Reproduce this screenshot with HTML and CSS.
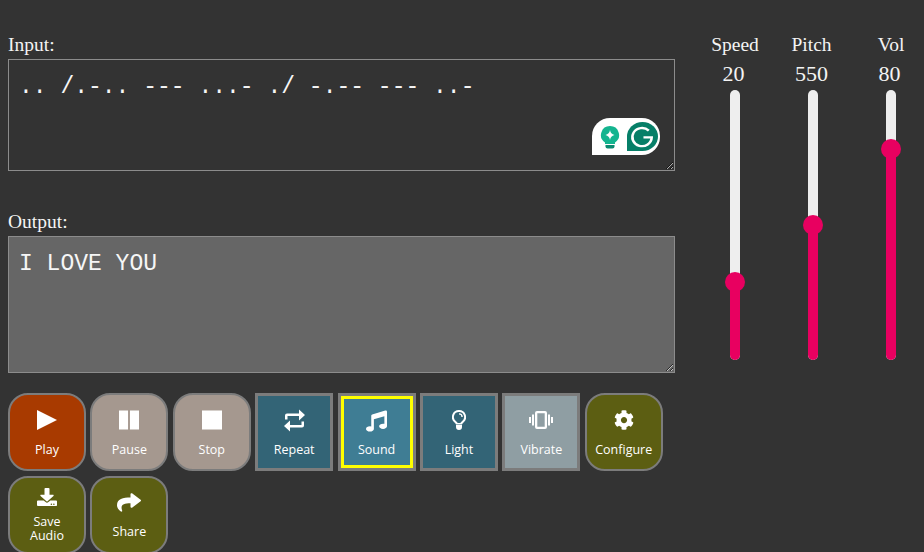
FILE: index.html
```html
<!DOCTYPE html>
<html lang="en">

<head>
    <meta charset="UTF-8">
    <meta name="viewport" content="width=device-width, initial-scale=1.0">
    <title>Morse Code Translator</title>
    <link rel="stylesheet" href="styles.css">
</head>

<body>
    <div class="page">
        <div class="main">
            <label class="field-label input-label" for="input">Input:</label>
            <div class="input-wrap">
                <textarea id="input" class="code-box input-box" spellcheck="false">.. /.-.. --- ...- ./ -.-- --- ..-</textarea>
                <div class="grammarly">
                    <svg class="bulb" viewBox="0 0 20 24" width="20" height="24">
                        <path fill="#14b48f" d="M10 1a9 9 0 0 0-5 16.5V19h10v-1.500A9 9 0 0 0 10 1z" />
                        <path fill="#fff" d="M10 5c.5 3 1.800 4.300 4.500 5-2.700.7-4 2-4.500 5-.5-3-1.800-4.300-4.500-5 2.700-.7 4-2 4.500-5z" />
                        <path fill="#0b8a70" d="M5.500 20h9v1.500a2 2 0 0 1-2 2h-5a2 2 0 0 1-2-2z" />
                    </svg>
                    <div class="g-mark">
                        <svg viewBox="0 0 32 32" width="31" height="29" preserveAspectRatio="none">
                            <path fill="#067f68" d="M16 0a16 16 0 0 1 0 32H0V16A16 16 0 0 1 16 0z" />
                            <path fill="none" stroke="#fff" stroke-width="2.600" d="M22.500 9.500A10 10 0 1 0 25.500 17H17" />
                        </svg>
                    </div>
                </div>
            </div>

            <label class="field-label output-label" for="output">Output:</label>
            <textarea id="output" class="code-box output-box" readonly>I LOVE YOU</textarea>

            <div class="buttons">
                <button class="btn round play">
                    <svg class="icon" viewBox="0 0 20 20"><path d="M0 0l20 10L0 20z" /></svg>
                    <span>Play</span>
                </button>
                <button class="btn round mute">
                    <svg class="icon" viewBox="0 0 21 20"><path d="M0 0h9.500v20H0zM11.500 0H21v20h-9.500z" /></svg>
                    <span>Pause</span>
                </button>
                <button class="btn round mute">
                    <svg class="icon" viewBox="0 0 21 20"><path d="M0 0h21v20H0z" /></svg>
                    <span>Stop</span>
                </button>
                <button class="btn toggle">
                    <svg class="icon repeat" viewBox="0 0 21 23">
                        <path d="M1 10.500V6.500A2 2 0 0 1 3 4.500h12V.5l6 5.500-6 5.500V7H3.500v3.500zM20 12.500v4a2 2 0 0 1-2 2H6v4L0 17l6-5.500V16h11.500v-3.500z" />
                    </svg>
                    <span>Repeat</span>
                </button>
                <button class="btn toggle active">
                    <svg class="icon music" viewBox="0 0 512 512"><path d="M470.38 1.51L150.41 96A32 32 0 0 0 128 126.51v261.41A139 139 0 0 0 96 384c-53 0-96 28.66-96 64s43 64 96 64 96-28.66 96-64V214.32l256-75v184.61a138.4 138.4 0 0 0-32-3.93c-53 0-96 28.66-96 64s43 64 96 64 96-28.65 96-64V32a32 32 0 0 0-41.62-30.49z" /></svg>
                    <span>Sound</span>
                </button>
                <button class="btn toggle">
                    <svg class="icon bulb-icon" viewBox="0 0 14 20">
                        <path fill-rule="evenodd" d="M7 0a7 7 0 0 0-4.500 12.400c.8.7 1.300 1.400 1.500 2.100h6c.2-.7.700-1.400 1.500-2.100A7 7 0 0 0 7 0zm0 2a5 5 0 0 1 3.200 8.900c-.8.7-1.500 1.300-1.900 2.100H5.700c-.4-.8-1.100-1.400-1.900-2.100A5 5 0 0 1 7 2z" />
                        <path d="M4 15h6v2a3 3 0 0 1-6 0zM7 3.200a3.800 3.800 0 0 1 3.800 3.800H9.400A2.400 2.400 0 0 0 7 4.600z" />
                    </svg>
                    <span>Light</span>
                </button>
                <button class="btn toggle off">
                    <svg class="icon wide" viewBox="0 0 24 18">
                        <path fill-rule="evenodd" d="M8 0h8a2 2 0 0 1 2 2v14a2 2 0 0 1-2 2H8a2 2 0 0 1-2-2V2a2 2 0 0 1 2-2zm.3 2.200v13.600h7.400V2.200z" />
                        <path d="M3 3.500h2V14.500H3zM19 3.500h2V14.500h-2zM0 6h2v6H0zM22 6h2v6h-2z" />
                    </svg>
                    <span>Vibrate</span>
                </button>
                <button class="btn round olive">
                    <svg class="icon" viewBox="0 0 512 512"><path d="M487.4 315.7l-42.6-24.6c4.3-23.2 4.3-47 0-70.2l42.6-24.6c4.9-2.8 7.1-8.6 5.500-14-11.100-35.600-30-67.800-54.700-94.600-3.800-4.100-10-5.100-14.800-2.300L380.800 110c-17.900-15.400-38.500-27.300-60.800-35.100V25.800c0-5.600-3.900-10.500-9.400-11.700-36.700-8.200-74.300-7.800-109.200 0-5.500 1.200-9.400 6.100-9.400 11.700V75c-22.200 7.900-42.800 19.800-60.800 35.100L88.700 85.500c-4.900-2.800-11-1.900-14.800 2.300-24.700 26.700-43.600 58.900-54.700 94.600-1.700 5.400.6 11.200 5.500 14L67.300 221c-4.300 23.200-4.300 47 0 70.200l-42.600 24.600c-4.900 2.800-7.100 8.600-5.500 14 11.100 35.600 30 67.800 54.700 94.600 3.800 4.100 10 5.100 14.800 2.300l42.600-24.600c17.900 15.400 38.500 27.300 60.800 35.100v49.200c0 5.600 3.900 10.500 9.400 11.700 36.700 8.200 74.300 7.800 109.200 0 5.500-1.200 9.400-6.100 9.400-11.700v-49.200c22.200-7.900 42.800-19.800 60.800-35.100l42.600 24.600c4.900 2.800 11 1.900 14.800-2.300 24.700-26.700 43.600-58.900 54.700-94.600 1.500-5.500-.7-11.300-5.600-14.100zM256 336c-44.100 0-80-35.900-80-80s35.900-80 80-80 80 35.900 80 80-35.900 80-80 80z" /></svg>
                    <span>Configure</span>
                </button>
                <button class="btn round olive save">
                    <svg class="icon small" viewBox="0 0 512 512" preserveAspectRatio="none"><path d="M216 0h80c13.300 0 24 10.700 24 24v168h87.700c17.800 0 26.700 21.500 14.100 34.100L269.700 378.300c-7.500 7.500-19.800 7.500-27.300 0L90.100 226.100c-12.600-12.600-3.700-34.100 14.100-34.100H192V24c0-13.300 10.700-24 24-24zm296 376v112c0 13.300-10.700 24-24 24H24c-13.300 0-24-10.700-24-24V376c0-13.300 10.700-24 24-24h146.700l49 49c20.100 20.100 52.500 20.100 72.600 0l49-49H488c13.300 0 24 10.700 24 24zm-124 88c0-11-9-20-20-20s-20 9-20 20 9 20 20 20 20-9 20-20zm64 0c0-11-9-20-20-20s-20 9-20 20 9 20 20 20 20-9 20-20z" /></svg>
                    <span>Save<br>Audio</span>
                </button>
                <button class="btn round olive share-btn">
                    <svg class="icon share" viewBox="0 0 512 512" preserveAspectRatio="none"><path d="M503.691 189.836L327.687 37.851C312.281 24.546 288 35.347 288 56.015v80.053C127.371 137.907 0 170.100 0 322.326c0 61.441 39.581 122.309 83.333 154.132 13.653 9.931 33.111-2.533 28.077-18.631C66.066 312.814 132.917 274.316 288 272.085V360c0 20.700 24.300 31.453 39.687 18.164l176.004-152c11.071-9.562 11.086-26.753 0-36.328z" /></svg>
                    <span>Share</span>
                </button>
            </div>
        </div>

        <div class="sliders">
            <div class="slider">
                <div class="slider-name">Speed</div>
                <div class="slider-value">20</div>
                <div class="track">
                    <div class="fill" style="height: 78px"><div class="thumb"></div></div>
                </div>
            </div>
            <div class="slider">
                <div class="slider-name pitch">Pitch</div>
                <div class="slider-value">550</div>
                <div class="track">
                    <div class="fill" style="height: 135px"><div class="thumb"></div></div>
                </div>
            </div>
            <div class="slider">
                <div class="slider-name">Vol</div>
                <div class="slider-value">80</div>
                <div class="track">
                    <div class="fill" style="height: 211px"><div class="thumb"></div></div>
                </div>
            </div>
        </div>
    </div>
</body>

</html>
```

FILE: styles.css
```css
html,
body {
    height: 100%;
}

body {
    margin: 0;
    background: #333;
    color: #fff;
    overflow: hidden;
}

.page {
    display: flex;
    padding: 35px 0 0 8px;
}

.main {
    width: 667px;
    display: flex;
    flex-direction: column;
}

.field-label {
    font-family: "Liberation Serif", serif;
    font-size: 19.500px;
    line-height: 20px;
    color: #f4f4f4;
    display: block;
}

.input-label {
    margin-bottom: 4px;
}

.output-label {
    margin-top: 41px;
    margin-bottom: 4px;
}

.input-wrap {
    position: relative;
}

.code-box {
    display: block;
    box-sizing: border-box;
    width: 667px;
    margin: 0;
    border: 1px solid #8c8c8c;
    color: #f6f6f6;
    font-family: "Liberation Mono", monospace;
    font-size: 23px;
    outline: none;
}

.input-box {
    height: 112px;
    padding: 11px 10px;
    background: #333;
    line-height: 32px;
}

.output-box {
    height: 137px;
    padding: 11px 10px;
    background: #666;
    line-height: 33px;
}

.grammarly {
    position: absolute;
    left: 584px;
    top: 59px;
    width: 68px;
    height: 37px;
    box-sizing: border-box;
    display: flex;
    align-items: center;
    padding-left: 8px;
    gap: 7px;
    background: #fff;
    border-radius: 18px 18px 18px 0;
}

.g-mark {
    display: flex;
}

.buttons {
    display: flex;
    flex-wrap: wrap;
    gap: 5px 4.4px;
    margin-top: 20px;
}

.btn {
    box-sizing: border-box;
    width: 78px;
    height: 78px;
    padding: 14px 0 0;
    display: flex;
    flex-direction: column;
    align-items: center;
    border: 3px solid #7c7c7c;
    color: #fff;
    font-family: "Open Sans", sans-serif;
    font-size: 12.500px;
    line-height: 14px;
}

.btn span {
    margin-top: 13px;
}

.round {
    border-width: 2px;
    padding-top: 15px;
    border-radius: 20px;
}

.play {
    background: #a83a00;
}

.mute {
    background: #a5988f;
}

.olive {
    background: #5c5e12;
}

.toggle {
    background: #336476;
}

.toggle.active {
    background: #3f7d94;
    box-shadow: inset 0 0 0 3px #ff0;
}

.toggle.off {
    background: #8f9ea3;
}

.icon {
    display: block;
    width: 20px;
    height: 20px;
    fill: #fff;
}

.icon.repeat {
    width: 21px;
    height: 23px;
    margin-top: -1px;
    margin-bottom: -2px;
}

.icon.music {
    width: 21px;
    height: 22px;
    margin-bottom: -2px;
}

.icon.bulb-icon {
    width: 14px;
}

.icon.wide {
    width: 24px;
    height: 18px;
    margin-top: 1px;
    margin-bottom: 1px;
}

.icon.small {
    height: 18px;
    margin-top: -5px;
}

.icon.share {
    width: 24px;
    height: 21px;
    margin-top: -1px;
}

.save span {
    margin-top: 9px;
}

.share-btn span {
    margin-top: 12px;
}

.sliders {
    display: flex;
    gap: 12px;
    margin-left: 27px;
}

.slider {
    width: 66px;
    display: flex;
    flex-direction: column;
    align-items: center;
    font-family: "Liberation Serif", serif;
    color: #f4f4f4;
}

.slider-name {
    font-size: 19.500px;
    line-height: 20px;
}

.slider-name.pitch {
    margin-right: 3px;
}

.slider-value {
    font-size: 22px;
    line-height: 22px;
    margin-top: 8px;
    margin-right: 3px;
}

.track {
    position: relative;
    width: 10px;
    height: 270px;
    margin-top: 5px;
    background: #eee;
    border-radius: 5px;
}

.fill {
    position: absolute;
    left: 0;
    bottom: 0;
    width: 10px;
    background: #e80060;
    border-radius: 0 0 5px 5px;
}

.thumb {
    position: absolute;
    left: -5px;
    top: -10px;
    width: 20px;
    height: 20px;
    border-radius: 50%;
    background: #e80060;
}
```
